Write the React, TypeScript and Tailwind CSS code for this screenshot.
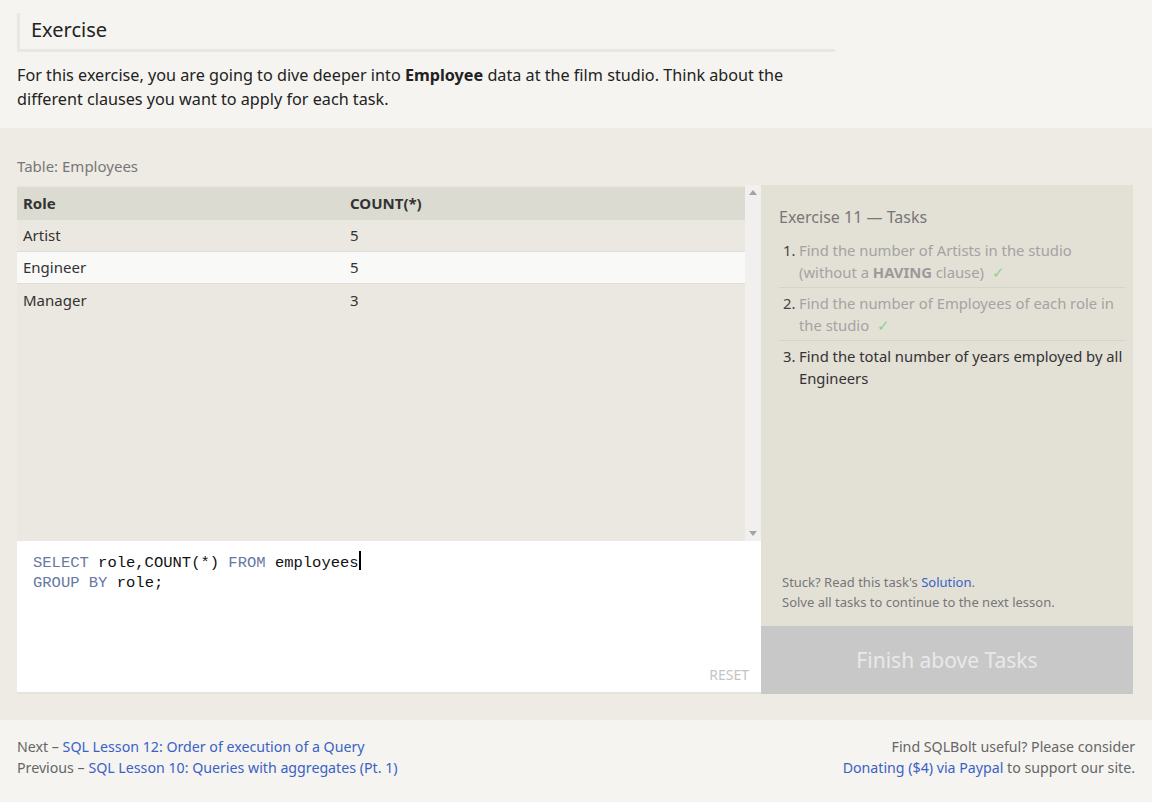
import React from "react";

const sans = "font-['Segoe_UI','Noto_Sans','Open_Sans',sans-serif]";

function Check() {
  return <span className="ml-2 text-[#8fcf8f]">✓</span>;
}

export default function App() {
  const rows = [
    ["Artist", "5"],
    ["Engineer", "5"],
    ["Manager", "3"],
  ];
  return (
    <div className={`${sans} h-[802px] w-[1152px] overflow-hidden bg-[#f5f4f0] text-[#333]`}>
      {/* intro */}
      <section className="h-[128px] px-[17px] pt-[13px]">
        <div className="w-[818px] border-b-[3px] border-l-[3px] border-[#e9e7df] pl-[11px] pb-[6px] pt-[4px] text-[20px] leading-[26px] text-[#222]">
          Exercise
        </div>
        <p className="mt-[11px] w-[790px] text-[16.2px] leading-[24px] text-[#222]">
          For this exercise, you are going to dive deeper into <b>Employee</b> data at the film studio. Think about the
          different clauses you want to apply for each task.
        </p>
      </section>

      {/* exercise */}
      <section className="h-[592px] bg-[#eeebe4] px-[17px] pt-[28px]">
        <div className="mb-[9px] text-[15px] leading-[20px] text-[#777]">Table: Employees</div>
        <div className="flex h-[509px] w-[1116px]">
          {/* left */}
          <div className="flex w-[744px] flex-col">
            <div className="flex h-[356px] bg-[#eae8e0]">
              <div className="flex-1 pt-[2px]">
                <div className="flex h-[33px] items-center bg-[#dcdbd1] text-[15px] font-bold text-[#333]">
                  <div className="w-[333px] pl-[6px]">Role</div>
                  <div>COUNT(*)</div>
                </div>
                {rows.map((r, i) => (
                  <div
                    key={r[0]}
                    className={`flex h-[32px] items-center border-b border-[#dedcd4] text-[15px] text-[#333] ${
                      i === 1 ? "bg-[#f9f9f8]" : "bg-[#eae8e0]"
                    } ${i === 2 ? "border-b-0" : ""}`}
                  >
                    <div className="w-[333px] pl-[6px]">{r[0]}</div>
                    <div>{r[1]}</div>
                  </div>
                ))}
              </div>
              <div className="flex w-[16px] flex-col items-center justify-between bg-[#f1f0ef] py-[5px] text-[#999]">
                <svg width="8" height="5" viewBox="0 0 8 5">
                  <path d="M4 0L8 5H0z" fill="#a3a3a3" />
                </svg>
                <svg width="8" height="5" viewBox="0 0 8 5">
                  <path d="M0 0H8L4 5z" fill="#a3a3a3" />
                </svg>
              </div>
            </div>
            <div className="flex flex-1 flex-col border-b-2 border-[#e6e4dc] bg-white pl-[16px] pr-[12px] pt-[7px]">
              <pre className="font-['Liberation_Mono',monospace] text-[15.5px] leading-[20px] text-[#111]">
                <span className="text-[#6679a3]">SELECT</span> role,COUNT(*) <span className="text-[#6679a3]">FROM</span>{" "}
                employees<span className="inline-block h-[19px] w-[2px] translate-y-[3px] bg-black" />
                {"\n"}
                <span className="text-[#6679a3]">GROUP BY</span> role;
              </pre>
              <div className="mt-auto mb-[7px] self-end text-[14px] text-[#c4c4c4]">RESET</div>
            </div>
          </div>

          {/* right */}
          <div className="flex w-[372px] flex-col bg-[#e3e0d6]">
            <div className="flex flex-1 flex-col pl-[18px] pr-[8px] pt-[21px]">
              <div className="text-[16px] leading-[22px] text-[#777]">Exercise 11 — Tasks</div>
              <ol className="mt-[11px] text-[14.8px] leading-[22px]">
                <li className="flex border-b border-[#d6d3c9] pb-[4px]">
                  <span className="w-[18px] shrink-0 pl-[4px] text-[#444]">1.</span>
                  <span className="pl-[2px] text-[#a3a3a3]">
                    Find the number of Artists in the studio (without a <b className="text-[#9a9a9a]">HAVING</b> clause)
                    <Check />
                  </span>
                </li>
                <li className="mt-[4px] flex border-b border-[#d6d3c9] pb-[4px]">
                  <span className="w-[18px] shrink-0 pl-[4px] text-[#444]">2.</span>
                  <span className="pl-[2px] text-[#a3a3a3]">
                    Find the number of Employees of each role in the studio
                    <Check />
                  </span>
                </li>
                <li className="mt-[4px] flex">
                  <span className="w-[18px] shrink-0 pl-[4px] text-[#333]">3.</span>
                  <span className="pl-[2px] text-[#333]">Find the total number of years employed by all Engineers</span>
                </li>
              </ol>
              <div className="mt-auto mb-[14px] pl-[3px] text-[13px] leading-[20px] text-[#777]">
                Stuck? Read this task's <span className="text-[#3a62c6]">Solution</span>.
                <br />
                Solve all tasks to continue to the next lesson.
              </div>
            </div>
            <div className="flex h-[68px] items-center justify-center bg-[#c8c8c8] pt-[2px] text-[21px] text-[#e9e9e9]">
              Finish above Tasks
            </div>
          </div>
        </div>
      </section>

      {/* footer */}
      <footer className="flex justify-between px-[17px] pt-[16px] text-[14.2px] leading-[21px] text-[#666]">
        <div>
          <div>
            Next – <span className="text-[#3a62c6]">SQL Lesson 12: Order of execution of a Query</span>
          </div>
          <div>
            Previous – <span className="text-[#3a62c6]">SQL Lesson 10: Queries with aggregates (Pt. 1)</span>
          </div>
        </div>
        <div className="text-right">
          <div>Find SQLBolt useful? Please consider</div>
          <div>
            <span className="text-[#3a62c6]">Donating ($4) via Paypal</span> to support our site.
          </div>
        </div>
      </footer>
    </div>
  );
}
